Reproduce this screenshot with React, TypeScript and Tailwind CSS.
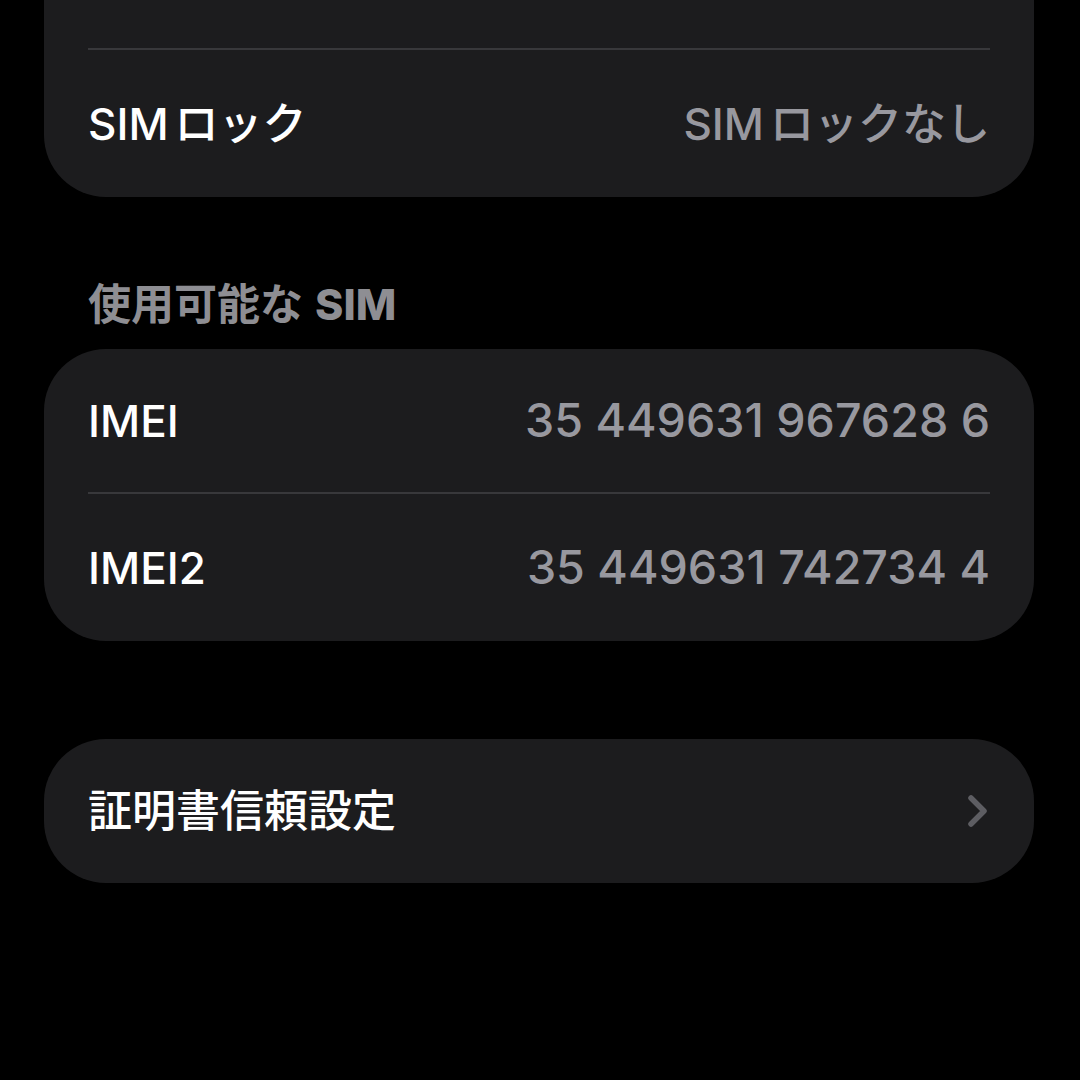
import React from 'react';

const font = { fontFamily: '"Inter", "Noto Sans CJK JP", sans-serif' };

// small gap between Latin and kana, like the system font does
function Sim({ rest }: { rest: string }) {
  return (
    <>
      <span className="mr-[6px]">SIM</span>
      {rest}
    </>
  );
}

function Row({ label, value, chevron, h }: { label: React.ReactNode; value?: React.ReactNode; chevron?: boolean; h: string }) {
  return (
    <div className={`flex items-center justify-between pl-[44px] pr-[44px] ${h}`}>
      <span className="text-[44px] font-medium text-white leading-none">{label}</span>
      {value}
      {chevron && (
        <svg width="22" height="34" viewBox="0 0 22 34" className="mr-[1px]">
          <polyline
            points="4,4 17,17 4,30"
            fill="none"
            stroke="#5d5d62"
            strokeWidth="5.5"
            strokeLinecap="round"
            strokeLinejoin="round"
          />
        </svg>
      )}
    </div>
  );
}

function Value({ children, size }: { children: React.ReactNode; size: string }) {
  return <span className={`${size} font-medium text-[#98989f] leading-none`}>{children}</span>;
}

function Divider() {
  return <div className="h-[2px] bg-[#38383b] mx-[44px]" />;
}

export default function App() {
  return (
    <div className="w-full h-[1080px] bg-black overflow-hidden pl-[44px] pr-[46px]" style={font}>
      {/* SIM lock card (top row is scrolled off screen) */}
      <div className="-mt-[99px] bg-[#1c1c1e] rounded-[62px]">
        <Row label="" h="h-[147px]" />
        <Divider />
        <Row
          label={<Sim rest="ロック" />}
          value={<Value size="text-[44px]"><Sim rest="ロックなし" /></Value>}
          h="h-[147px]"
        />
      </div>

      <div className="mt-[82px] mb-[20px] pl-[44px] text-[43px] font-bold text-[#8e8e93] leading-[50px]">
        使用可能な<span className="ml-[12px] font-extrabold">SIM</span>
      </div>

      <div className="bg-[#1c1c1e] rounded-[62px]">
        <Row label="IMEI" value={<Value size="text-[46.6px]">35 449631 967628 6</Value>} h="h-[143px]" />
        <Divider />
        <Row label="IMEI2" value={<Value size="text-[46.6px]">35 449631 742734 4</Value>} h="h-[147px]" />
      </div>

      <div className="mt-[98px] bg-[#1c1c1e] rounded-[62px]">
        <Row label="証明書信頼設定" chevron h="h-[144px]" />
      </div>
    </div>
  );
}
